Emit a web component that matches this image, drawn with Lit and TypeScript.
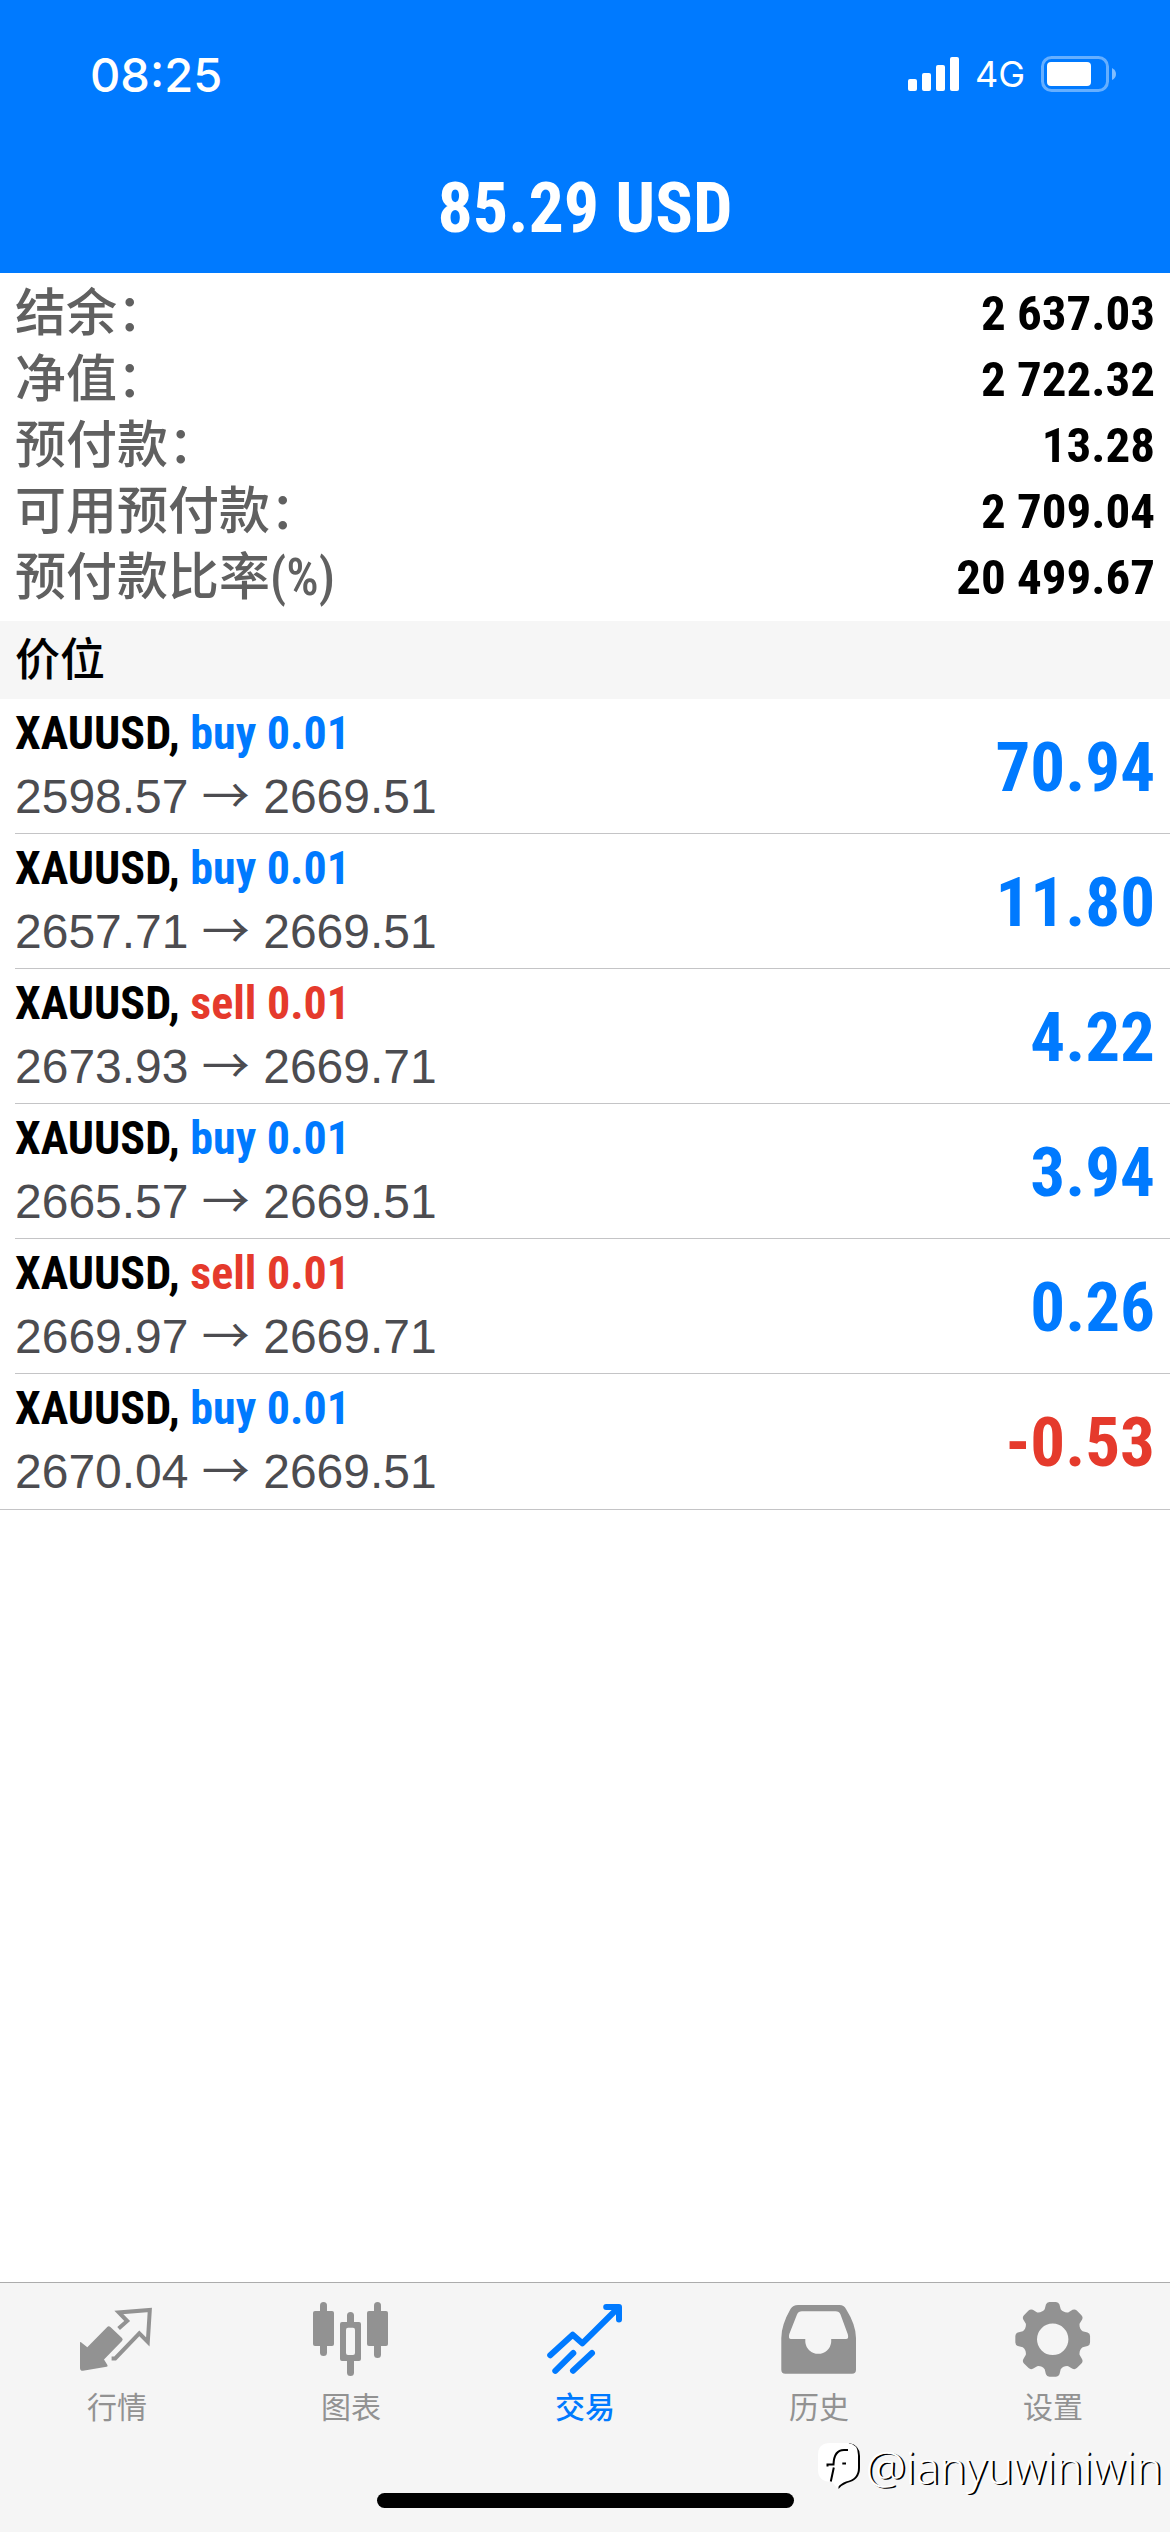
import { LitElement, html, css, svg, nothing } from "lit";
import { customElement, property, state } from "lit/decorators.js";
import { classMap } from "lit/directives/class-map.js";

interface Position {
  symbol: string;
  side: "buy" | "sell";
  lots: string;
  open: string;
  current: string;
  profit: string;
}

const SUMMARY = [
  { label: "结余：", value: "2 637.03" },
  { label: "净值：", value: "2 722.32" },
  { label: "预付款：", value: "13.28" },
  { label: "可用预付款：", value: "2 709.04" },
  { label: "预付款比率(%)", value: "20 499.67" },
];

const POSITIONS: Position[] = [
  { symbol: "XAUUSD", side: "buy", lots: "0.01", open: "2598.57", current: "2669.51", profit: "70.94" },
  { symbol: "XAUUSD", side: "buy", lots: "0.01", open: "2657.71", current: "2669.51", profit: "11.80" },
  { symbol: "XAUUSD", side: "sell", lots: "0.01", open: "2673.93", current: "2669.71", profit: "4.22" },
  { symbol: "XAUUSD", side: "buy", lots: "0.01", open: "2665.57", current: "2669.51", profit: "3.94" },
  { symbol: "XAUUSD", side: "sell", lots: "0.01", open: "2669.97", current: "2669.71", profit: "0.26" },
  { symbol: "XAUUSD", side: "buy", lots: "0.01", open: "2670.04", current: "2669.51", profit: "-0.53" },
];

/** Outline of an eight-toothed gear centred on (cx, cy). */
function gearPath(cx: number, cy: number): string {
  const at = (r: number, deg: number) => {
    const a = ((deg - 90) * Math.PI) / 180;
    return `${(cx + r * Math.cos(a)).toFixed(2)} ${(cy + r * Math.sin(a)).toFixed(2)}`;
  };
  let d = "";
  for (let k = 0; k < 8; k++) {
    const a = k * 45;
    d += `${k ? "L" : "M"}${at(31, a - 15)}L${at(35.5, a - 11)}Q${at(37.8, a - 9)} ${at(37.5, a - 5)}`;
    d += `L${at(37.5, a + 5)}Q${at(37.8, a + 9)} ${at(35.5, a + 11)}L${at(31, a + 15)}Q${at(28.5, a + 22.5)} ${at(31, a + 30)}`;
  }
  return d + "Z";
}

const ICONS: Record<string, unknown> = {
  quotes: svg`
    <path fill="currentColor" d="M2 42.5Q2 41.5 3 42.3L9.3 47.3L29 27.2Q30.6 25.4 32.4 27L44 38Q45.4 39.4 44 41L26 59.5L29.4 65Q30.2 66.4 28.6 66.8L5 70.8Q2 71 2 68Z"/>
    <path fill="none" stroke="currentColor" stroke-width="4" d="M40.6 28.6L49.2 21L40.8 12.4L71.8 10L69.8 42L61.3 33.3L37.2 58.4H33.6"/>`,
  chart: svg`
    <g fill="currentColor">
      <rect x="1" y="11" width="21" height="35" rx="2"/><rect x="8" y="2" width="7" height="54" rx="3.5"/>
      <rect x="55" y="11" width="21" height="35" rx="2"/><rect x="62" y="2" width="7" height="56" rx="3.5"/>
      <path d="M35 22V15.500A3.500 3.500 0 0 1 42 15.500V22H47Q49 22 49 24V59Q49 61 47 61H42V72.500A3.500 3.500 0 0 1 35 72.500V61H30Q28 61 28 59V24Q28 22 30 22ZM36 27.700Q34 27.700 34 30V53Q34 55 36 55H41Q43 55 43 53V30Q43 27.700 41 27.700Z" fill-rule="evenodd"/>
    </g>`,
  trade: svg`
    <g fill="none" stroke="currentColor" stroke-width="6" stroke-linecap="round" stroke-linejoin="round">
      <path d="M4.200 55.300L26.700 34.700L36.300 43.300L72 8"/>
      <path d="M60.200 7H73V19.600"/>
      <path d="M9.300 70.800L27.300 53M27 70.800L46 53"/>
    </g>
    <path fill="currentColor" d="M64 7H73V17Z"/>`,
  history: svg`
    <path fill="currentColor" fill-rule="evenodd" d="M18 5H59.500Q64 5 66 9Q76 25 76 38V69.700Q76 73.700 72 73.700H5.300Q1.300 73.700 1.300 69.700V38Q1.300 25 10.500 9Q13 5 18 5ZM22 11.300Q18.400 11.300 17 14.500L9.300 34Q8 39 11 39H25.300V42A13 13 0 0 0 51.200 42V39H66Q69.200 39 67.700 34L60.500 14.500Q59.200 11.300 55.500 11.300Z"/>`,
  settings: svg`
    <path fill="currentColor" fill-rule="evenodd" d="${gearPath(38.7, 39.3) + "M54.4 39.3A15.7 15.7 0 1 0 23 39.3A15.7 15.7 0 1 0 54.4 39.3Z"}"/>`,
};

const TABS = [
  { id: "quotes", label: "行情" },
  { id: "chart", label: "图表" },
  { id: "trade", label: "交易" },
  { id: "history", label: "历史" },
  { id: "settings", label: "设置" },
];

const CONDENSED = css`"Roboto Condensed", "Arial Narrow", "Noto Sans CJK SC", sans-serif`;
const CJK = css`"Noto Sans CJK SC", sans-serif`;

@customElement("status-bar")
class StatusBar extends LitElement {
  static styles = css`
    :host {
      display: flex;
      align-items: center;
      justify-content: space-between;
      height: 140px;
      padding: 4px 53px 0 90px;
      font-family: Inter, sans-serif;
      color: #fff;
    }
    .time { font-size: 47px; font-weight: 500; }
    .right { display: flex; align-items: center; gap: 16px; }
    .network { font-size: 36px; }
    svg { display: block; }
  `;
  render() {
    return html`
      <span class="time">08:25</span>
      <div class="right">
        <svg width="51" height="34" viewBox="0 0 51 34" fill="#fff" aria-hidden="true">
          <rect x="0" y="22" width="9" height="12" rx="2"/>
          <rect x="14" y="16" width="9" height="18" rx="2"/>
          <rect x="28" y="8" width="9" height="26" rx="2"/>
          <rect x="42" y="0" width="9" height="34" rx="2"/>
        </svg>
        <span class="network">4G</span>
        <svg width="76" height="36" viewBox="0 0 76 36" aria-hidden="true">
          <rect x="1.500" y="1.500" width="65" height="33" rx="9" fill="none" stroke="#fff" stroke-opacity=".4" stroke-width="3"/>
          <rect x="6" y="6" width="44" height="24" rx="4" fill="#fff"/>
          <path d="M71 12Q75 14 75 18T71 24Z" fill="#fff" fill-opacity=".5"/>
        </svg>
      </div>`;
  }
}

@customElement("account-summary")
class AccountSummary extends LitElement {
  static styles = css`
    :host { display: block; padding: 8px 15px 10px; }
    dl { margin: 0; }
    .row { display: flex; justify-content: space-between; line-height: 66px; }
    dt { font-family: ${CONDENSED}; font-size: 51px; font-weight: 500; color: #606060; }
    dd { margin: 0; font-family: ${CONDENSED}; font-size: 49px; font-weight: 700; color: #000; }
  `;
  render() {
    return html`<dl>
      ${SUMMARY.map((s) => html`<div class="row"><dt>${s.label}</dt><dd>${s.value}</dd></div>`)}
    </dl>`;
  }
}

@customElement("position-list")
class PositionList extends LitElement {
  static styles = css`
    :host { display: block; }
    h2 {
      margin: 0;
      padding: 2px 15px 0;
      background: #f6f6f6;
      font-family: ${CONDENSED};
      font-size: 45px;
      font-weight: 500;
      line-height: 76px;
    }
    ul { margin: 0; padding: 0; list-style: none; border-bottom: 1px solid #c4c4c6; }
    li {
      display: flex;
      align-items: center;
      justify-content: space-between;
      margin-left: 15px;
      padding: 3px 15px 5px 0;
      border-bottom: 1px solid #c4c4c6;
    }
    li:last-child { border-bottom-color: transparent; }
    p { margin: 0; line-height: 63px; }
    .title { font-family: ${CONDENSED}; font-size: 46px; font-weight: 700; color: #000; }
    .prices { font-family: "Liberation Sans", sans-serif; font-size: 48px; color: #4c4c50; }
    .arrow { font-family: ${CJK}; line-height: 0; }
    .profit {
      padding-top: 6px;
      font-family: ${CONDENSED};
      font-size: 69px;
      font-weight: 700;
      line-height: 84px;
    }
    .up { color: #007aff; }
    .down { color: #e53a2c; }
  `;
  render() {
    return html`
      <h2>价位</h2>
      <ul>
        ${POSITIONS.map((p) => {
          const loss = p.profit.startsWith("-");
          return html`<li>
            <div>
              <p class="title">${p.symbol}, <span class=${p.side === "buy" ? "up" : "down"}>${p.side} ${p.lots}</span></p>
              <p class="prices">${p.open} <span class="arrow">→</span> ${p.current}</p>
            </div>
            <span class=${classMap({ profit: true, up: !loss, down: loss })}>${p.profit}</span>
          </li>`;
        })}
      </ul>`;
  }
}

@customElement("tab-bar")
class TabBar extends LitElement {
  @property() selected = "trade";
  static styles = css`
    :host { display: block; padding-bottom: 24px; border-top: 1px solid #acacac; background: #f5f5f5; }
    nav { display: grid; grid-template-columns: repeat(5, 1fr); }
    button {
      display: flex;
      flex-direction: column;
      align-items: center;
      gap: 9px;
      margin: 0;
      padding: 17px 0 0;
      border: 0;
      background: none;
      color: #929292;
      font-family: ${CJK};
      font-size: 30px;
      line-height: 36px;
    }
    .active { color: #007aff; font-weight: 500; }
    svg { display: block; width: 78px; height: 78px; }
    .home { width: 36%; max-width: 417px; height: 15px; margin: 70px auto 0; border-radius: 8px; background: #000; }
  `;
  render() {
    return html`
      <nav>
        ${TABS.map((t) => html`<button
          type="button"
          class=${classMap({ active: t.id === this.selected })}
          aria-current=${t.id === this.selected ? "page" : nothing}
          @click=${() => this.dispatchEvent(new CustomEvent("tab-change", { detail: t.id }))}
        ><svg viewBox="0 0 78 78" aria-hidden="true">${ICONS[t.id]}</svg><span>${t.label}</span></button>`)}
      </nav>
      <div class="home"></div>`;
  }
}

@customElement("author-mark")
class AuthorMark extends LitElement {
  static styles = css`
    :host { display: flex; align-items: center; gap: 4px; color: #fff; }
    svg { display: block; }
    .name {
      font-family: "Open Sans", "Noto Sans", sans-serif;
      font-size: 45px;
      font-weight: 300;
      line-height: 48px;
      text-shadow: 2px 1px 0 #000;
    }
  `;
  render() {
    return html`
      <svg width="44" height="48" viewBox="0 0 44 48" aria-hidden="true">
        <path fill="#000" d="M31 0Q42 2 42 13V25Q42 37 29 40Q24 42 20.500 46V38Z"/>
        <path fill="#fff" d="M12 0H30Q40 1 40 12V25Q40 36 28 38.500Q23 40 19 45L14 39Q0 39 0 27V12Q0 0 12 0Z"/>
        <path fill="none" stroke="#000" stroke-width="2" d="M9.500 23.500V21.500H15.500Q16 7 26 7H30M15.800 24.500L12.800 38.500M24.300 20.500H28"/>
      </svg>
      <span class="name">@ianyuwiniwin</span>`;
  }
}

@customElement("app-root")
class AppRoot extends LitElement {
  @state() private tab = "trade";
  static styles = css`
    :host {
      position: relative;
      display: flex;
      flex-direction: column;
      min-height: 100vh;
      background: #fff;
      font-family: "Liberation Sans", sans-serif;
    }
    header { background: #007aff; }
    h1 {
      margin: 0;
      color: #fff;
      font-family: ${CONDENSED};
      font-size: 70px;
      font-weight: 700;
      line-height: 129px;
      text-align: center;
    }
    main { flex: 1; }
    author-mark { position: absolute; right: 8px; bottom: 41px; }
  `;
  render() {
    return html`
      <header>
        <status-bar></status-bar>
        <h1>85.29 USD</h1>
      </header>
      <main>
        <account-summary></account-summary>
        <position-list></position-list>
      </main>
      <tab-bar .selected=${this.tab} @tab-change=${(e: CustomEvent<string>) => (this.tab = e.detail)}></tab-bar>
      <author-mark></author-mark>`;
  }
}
